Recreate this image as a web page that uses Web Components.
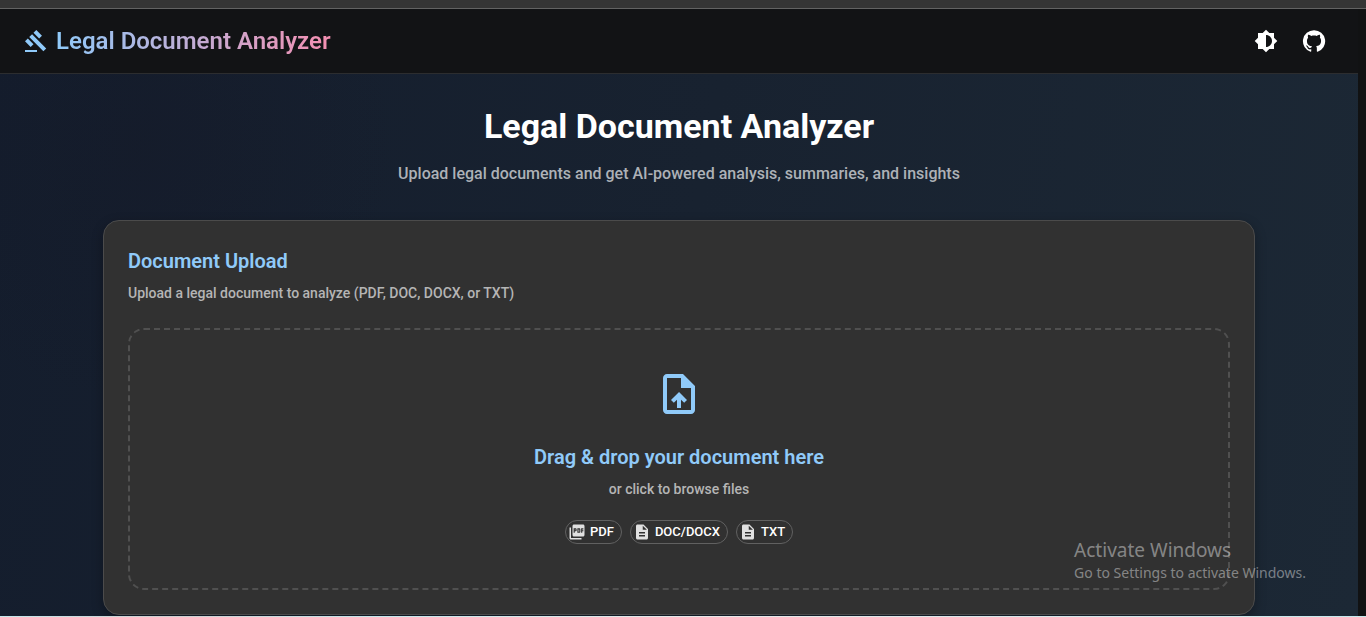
<!DOCTYPE html>
<html lang="en">
<head>
<meta charset="utf-8">
<meta name="viewport" content="width=device-width, initial-scale=1">
<title>Legal Document Analyzer</title>
<style>
  html, body { height: 100%; margin: 0; }
  body { overflow: hidden; background: #111213; color: #fff; font-family: Roboto, "Liberation Sans", sans-serif; }
</style>
</head>
<body>
<analyzer-app></analyzer-app>
<script>
const define = (name, html) => {
  const template = document.createElement('template');
  template.innerHTML = '<style>*{box-sizing:border-box}:host{display:block}h1,h2,h3,p{margin:0}</style>' + html;
  customElements.define(name, class extends HTMLElement {
    constructor() {
      super();
      this.attachShadow({ mode: 'open' }).append(template.content.cloneNode(true));
    }
  });
};

const ICONS = {
  gavel: '<path d="M1 21h12v2H1zM5.245 8.07l2.83-2.827 14.14 14.142-2.828 2.828zM12.317 1l5.657 5.656-2.83 2.83-5.654-5.66zM3.825 9.485l5.657 5.657-2.828 2.828-5.657-5.657z"/>',
  contrast: '<path d="M20 8.69V4h-4.69L12 .69 8.69 4H4v4.69L.69 12 4 15.31V20h4.69L12 23.31 15.31 20H20v-4.69L23.31 12 20 8.69zM12 18V6c3.31 0 6 2.69 6 6s-2.69 6-6 6z"/>',
  github: '<path d="M12 1.27a11 11 0 00-3.48 21.46c.55.09.73-.28.73-.55v-1.84c-3.03.64-3.67-1.46-3.67-1.46-.55-1.29-1.28-1.65-1.28-1.65-.92-.65.1-.65.1-.65 1.1 0 1.73 1.1 1.73 1.1.92 1.65 2.57 1.2 3.21.92a2 2 0 01.64-1.47c-2.47-.27-5.04-1.19-5.04-5.5 0-1.1.46-2.1 1.2-2.84a3.76 3.76 0 010-2.93s.91-.28 3.11 1.1c1.8-.49 3.7-.49 5.5 0 2.1-1.38 3.02-1.1 3.02-1.1a3.76 3.76 0 01.1 2.93c.83.74 1.2 1.74 1.2 2.94 0 4.21-2.57 5.13-5.04 5.4.45.37.82.92.82 2.02v3.03c0 .27.1.64.73.55A11 11 0 0012 1.27"/>',
  upload: '<path d="M14 2H6c-1.1 0-1.99.9-1.99 2L4 20c0 1.1.89 2 1.99 2H18c1.1 0 2-.9 2-2V8l-6-6zm4 18H6V4h7v5h5v11zM8 15.01l1.41 1.41L11 14.84V19h2v-4.16l1.59 1.59L16 15.01 12.01 11z"/>',
  pdf: '<path d="M20 2H8c-1.1 0-2 .9-2 2v12c0 1.1.9 2 2 2h12c1.1 0 2-.9 2-2V4c0-1.1-.9-2-2-2zm-8.5 7.5c0 .83-.67 1.5-1.5 1.5H9v2H7.5V7H10c.83 0 1.5.67 1.5 1.5v1zm5 2c0 .83-.67 1.5-1.5 1.5h-2.5V7H15c.83 0 1.5.67 1.5 1.5v3zm4-3H19v1h1.5V11H19v2h-1.5V7h3v1.5zM9 9.5h1v-1H9v1zM4 6H2v14c0 1.1.9 2 2 2h14v-2H4V6zm10 5.5h1v-3h-1v3z"/>',
  doc: '<path d="M14 2H6c-1.1 0-1.99.9-1.99 2L4 20c0 1.1.89 2 1.99 2H18c1.1 0 2-.9 2-2V8l-6-6zm2 16H8v-2h8v2zm0-4H8v-2h8v2zm-3-5V3.5L18.5 9H13z"/>'
};
customElements.define('app-icon', class extends HTMLElement {
  constructor() {
    super();
    this.attachShadow({ mode: 'open' }).innerHTML =
      '<style>:host{display:block;flex:none;width:var(--icon-size,24px);height:var(--icon-size,24px)}svg{display:block;width:100%;height:100%;fill:currentColor}</style>' +
      '<svg viewBox="0 0 24 24" aria-hidden="true">' + ICONS[this.getAttribute('name')] + '</svg>';
  }
});

define('app-header', `
<style>
  :host { background: #121315; border-bottom: 1px solid #2c2d2f; }
  header { display: flex; align-items: center; height: 64px; padding: 0 24px; }
  .brand { display: flex; align-items: center; gap: 8px; color: #90caf9; text-decoration: none; flex: none; }
  .name { font-size: 24px; line-height: 32px; font-weight: 600; background: linear-gradient(90deg, #90caf9, #f48fb1); background-clip: text; -webkit-background-clip: text; color: transparent; }
  nav { display: flex; gap: 8px; margin-left: auto; }
  button, nav a { display: block; padding: 8px; border: 0; background: none; color: #fff; cursor: pointer; }
</style>
<header>
  <a class="brand" href="#"><app-icon name="gavel"></app-icon><span class="name">Legal Document Analyzer</span></a>
  <nav>
    <button type="button" aria-label="Toggle theme"><app-icon name="contrast"></app-icon></button>
    <a href="#" aria-label="GitHub"><app-icon name="github"></app-icon></a>
  </nav>
</header>`);

define('page-intro', `
<style>
  :host { text-align: center; }
  h1 { font-size: 34px; line-height: 40px; font-weight: 700; }
  p { margin-top: 14px; font-size: 16px; line-height: 28px; font-weight: 500; color: #adb1b7; }
</style>
<h1><slot name="title"></slot></h1>
<p><slot></slot></p>`);

define('file-chip', `
<style>
  :host { --icon-size: 18px; display: flex; align-items: center; gap: 4px; height: 24px; padding: 0 7px 0 2px; border: 1px solid #616161; border-radius: 12px; font-size: 13px; line-height: 20px; font-weight: 500; }
  ::slotted(app-icon) { color: #e0e0e0; }
</style>
<slot name="icon"></slot><span><slot></slot></span>`);

define('drop-zone', `
<style>
  button { display: flex; flex-direction: column; align-items: center; width: 100%; padding: 40px; border: 2px dashed #505050; border-radius: 16px; background: none; color: inherit; font: inherit; cursor: pointer; }
  .up { --icon-size: 48px; color: #90caf9; }
  .lead { margin-top: 23px; font-size: 20px; line-height: 32px; font-weight: 600; color: #90caf9; }
  .hint { margin-top: 6px; font-size: 14px; line-height: 20px; font-weight: 500; color: #b5b5b5; }
  .types { display: flex; gap: 8px; margin: 21px 0 4px; }
</style>
<button type="button">
  <app-icon class="up" name="upload"></app-icon>
  <span class="lead">Drag &amp; drop your document here</span>
  <span class="hint">or click to browse files</span>
  <span class="types">
    <file-chip><app-icon slot="icon" name="pdf"></app-icon>PDF</file-chip>
    <file-chip><app-icon slot="icon" name="doc"></app-icon>DOC/DOCX</file-chip>
    <file-chip><app-icon slot="icon" name="doc"></app-icon>TXT</file-chip>
  </span>
</button>`);

define('upload-card', `
<style>
  :host { padding: 24px; border: 1px solid #4b4b4b; border-radius: 16px; background: #313131; box-shadow: 0 4px 12px rgba(0,0,0,.3); }
  h2 { font-size: 20px; line-height: 32px; font-weight: 600; color: #90caf9; }
  p { margin: 6px 0 25px; font-size: 14px; line-height: 20px; font-weight: 500; color: #b5b5b5; }
</style>
<h2>Document Upload</h2>
<p>Upload a legal document to analyze (PDF, DOC, DOCX, or TXT)</p>
<drop-zone></drop-zone>`);

define('system-watermark', `
<style>
  :host { position: absolute; right: 60px; bottom: 34px; color: rgba(255,255,255,.42); font-family: "Noto Sans", "Open Sans", sans-serif; pointer-events: none; }
  .a { font-size: 19px; line-height: 26px; }
  .b { font-size: 14px; line-height: 20px; }
</style>
<p class="a">Activate Windows</p>
<p class="b">Go to Settings to activate Windows.</p>`);

define('analyzer-app', `
<style>
  :host { position: relative; display: flex; flex-direction: column; height: 100%; overflow: hidden; }
  .chrome { flex: none; height: 9px; background: #353535; border-bottom: 1px solid #636363; }
  .view { flex: 1; min-height: 0; display: flex; flex-direction: column; margin-right: 8px; overflow: hidden; background: radial-gradient(circle at 10% 22%, rgba(21,24,38,.35), transparent 20%), linear-gradient(100deg, #141d2d, #182230 50%, #1c2835); }
  app-header { flex: none; }
  main { width: 100%; max-width: 1200px; margin: 0 auto; padding: 32px 24px; }
  upload-card { margin-top: 32px; }
  .taskbar { flex: none; height: 1px; background: linear-gradient(90deg, #c5e8ec, #d0d0d0 12%, #c5e8ec 28%, #e8e8e8 52%, #c5e8ec); }
</style>
<div class="chrome"></div>
<div class="view">
  <app-header></app-header>
  <main>
    <page-intro><span slot="title">Legal Document Analyzer</span>Upload legal documents and get AI-powered analysis, summaries, and insights</page-intro>
    <upload-card></upload-card>
  </main>
</div>
<div class="taskbar"></div>
<system-watermark></system-watermark>`);
</script>
</body>
</html>
